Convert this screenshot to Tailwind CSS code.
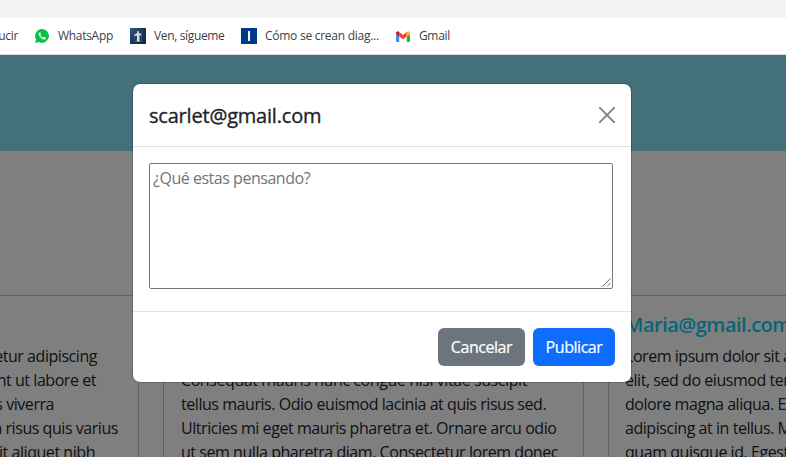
<!DOCTYPE html>
<html lang="es">
<head>
<meta charset="utf-8">
<title>Publicaciones</title>
<script src="https://cdn.jsdelivr.net/npm/@tailwindcss/browser@4"></script>
</head>
<body class="h-[457px] w-[786px] overflow-hidden bg-white font-['Open_Sans','Noto_Sans',sans-serif] text-[#212529]">
<div class="flex h-full flex-col">
  <div class="h-[18px] shrink-0 bg-[#f1f3f4]"></div>
  <nav class="flex h-[37px] shrink-0 items-center border-b border-[#d5d8da] bg-white text-[12px] whitespace-nowrap text-[#3c4043]">
    <div class="flex w-[18px] justify-end"><span class="tracking-[-0.3px]">Traducir</span></div>
    <svg class="ml-[17px] size-[14px] shrink-0" viewBox="0 0 14 14"><path fill="#0ac143" d="M7.1 0a6.9 6.9 0 1 1-3.3 13L0 14l1.1-3.6A6.9 6.9 0 0 1 7.1 0z"/><path fill="#fff" d="M4.6 3.4c-.8.3-1.2 1.200-.9 2.200.7 2.400 2.600 4.200 4.900 4.900 1 .2 2-.3 2.200-1.200.1-.4 0-.6-.3-.8l-1.300-.6c-.3-.1-.5 0-.7.2l-.5.6C6.700 8.200 5.700 7.200 5.300 6.200l.5-.6c.1-.2.200-.4.100-.6l-.6-1.400c-.1-.3-.4-.3-.7-.2z"/></svg>
    <div class="ml-[9px] w-[72px]"><span class="tracking-[-0.3px]">WhatsApp</span></div>
    <svg class="size-4 shrink-0" viewBox="0 0 16 16"><defs><linearGradient id="sky" x1="0" y1="0" x2="1" y2="1"><stop stop-color="#3a5877"/><stop offset=".5" stop-color="#173556"/><stop offset="1" stop-color="#0c2748"/></linearGradient></defs><path fill="url(#sky)" d="M0 0h16v16H0z"/><path fill="#3a5875" d="M4 4h1v10H4zM11 4h1v10h-1zM4 13h8v1H4z"/><path fill="#d8e0e6" d="M7.300 3h1.400v1.500L11.500 6.500l-.5 1.300L9.300 7l.4 6.500H6.800L7 7.500l-2.500.8-.2-1.300 3-2.300z"/></svg>
    <div class="ml-2 w-[87px]"><span class="tracking-[-0.35px]">Ven, sígueme</span></div>
    <svg class="size-4 shrink-0" viewBox="0 0 16 16"><path fill="#003a8f" d="M0 0h16v16H0z"/><path fill="#fff" d="M7 3h2v10H7z"/></svg>
    <div class="ml-2 w-[131px]"><span class="tracking-[-0.26px]">Cómo se crean diag...</span></div>
    <svg class="h-[11px] w-[14px] shrink-0" viewBox="0 0 14 11"><path fill="#4285f4" d="M0 3l3.200 2.400V11H1a1 1 0 0 1-1-1z"/><path fill="#34a853" d="M14 3l-3.200 2.400V11H13a1 1 0 0 0 1-1z"/><path fill="#ea4335" d="M3.200 1.100L7 4l3.800-2.900v4.300L7 8.200 3.200 5.400z"/><path fill="#c5221f" d="M0 2.100C0 .3 2 -.4 3.200.700v4.700L0 3z"/><path fill="#fbbc04" d="M14 2.100C14 .3 12-.4 10.800.700v4.700L14 3z"/></svg>
    <div class="ml-[9px]"><span class="tracking-[-0.35px]">Gmail</span></div>
  </nav>

  <main class="relative min-h-0 flex-1 overflow-hidden">
    <header class="h-24 bg-[#88e1f7]"></header>
    <section class="mt-36 ml-[-282px] flex w-[1312px] gap-6 text-[16px] leading-6 tracking-[-0.45px] whitespace-nowrap">
      <article class="h-[240px] w-[421px] shrink-0 border border-[#c6c6c6] pt-[48px] pl-[281px]">
        <p class="flex w-[97px] justify-end"><span>consectetur adipiscing</span></p>
        <p class="flex w-[96px] justify-end"><span>incididunt ut labore et</span></p>
        <p class="flex w-[54px] justify-end"><span>facilisis viverra</span></p>
        <p class="flex w-[118px] justify-end"><span>quam risus quis varius</span></p>
        <p class="flex w-[95px] justify-end"><span>sit aliquet nibh</span></p>
      </article>
      <article class="h-[240px] w-[421px] shrink-0 border border-[#c6c6c6] pt-[72px] pl-[17px]">
        <p class="tracking-[-0.42px]">Consequat mauris nunc congue nisi vitae suscipit</p>
        <p>tellus mauris. Odio euismod lacinia at quis risus sed.</p>
        <p>Ultricies mi eget mauris pharetra et. Ornare arcu odio</p>
        <p>ut sem nulla pharetra diam. Consectetur lorem donec</p>
      </article>
      <article class="h-[240px] w-[421px] shrink-0 border border-[#c6c6c6] pt-[17px] pl-4">
        <h5 class="mb-[7px] text-[20px] leading-6 font-semibold tracking-[-0.5px] text-[#0dcaf0]">Maria@gmail.com</h5>
        <p>Lorem ipsum dolor sit amet, consectetur</p>
        <p>elit, sed do eiusmod tempor incididunt</p>
        <p>dolore magna aliqua. Egestas</p>
        <p>adipiscing at in tellus. Mattis</p>
        <p>quam quisque id. Egestas</p>
      </article>
    </section>

    <div class="absolute inset-0 flex items-start bg-black/50 pt-7 pl-[132px]">
      <div role="dialog" class="flex h-[300px] w-[500px] flex-col rounded-lg border border-black/20 bg-white bg-clip-padding">
        <div class="flex h-[63px] shrink-0 items-center justify-between border-b border-[#dee2e6] px-4">
          <h5 class="pt-[2px] text-[20px] leading-[30px] tracking-[-0.2px] [-webkit-text-stroke:0.35px_#212529]">scarlet@gmail.com</h5>
          <svg class="size-4" viewBox="0 0 16 16"><path d="M.7.7l14.600 14.600M15.300.7L.7 15.300" stroke="#808080" stroke-width="1.900" stroke-linecap="round"/></svg>
        </div>
        <div class="h-[164px] shrink-0 px-4 pt-4">
          <div class="relative h-[126px] w-[464px] rounded-[2px] border border-[#767676] px-[3px] pt-[2px] text-[16px] leading-6 tracking-[-0.47px] text-[#757575]">¿Qué estas pensando?
            <svg class="absolute right-[1px] bottom-[1px] size-[9px]" viewBox="0 0 9 9"><path d="M.5 8.500l8-8M5 8.500L8.500 5" stroke="#666"/></svg>
          </div>
        </div>
        <div class="flex flex-1 items-center justify-end gap-2 border-t border-[#dee2e6] pr-4 text-[16px] tracking-[-0.45px] text-white [-webkit-text-stroke:0.2px_white]">
          <div class="flex h-[38px] w-[87px] items-center justify-center rounded-md bg-[#6c757d]">Cancelar</div>
          <div class="flex h-[38px] w-[82px] items-center justify-center rounded-md bg-[#0d6efd]">Publicar</div>
        </div>
      </div>
    </div>
  </main>
</div>
</body>
</html>
